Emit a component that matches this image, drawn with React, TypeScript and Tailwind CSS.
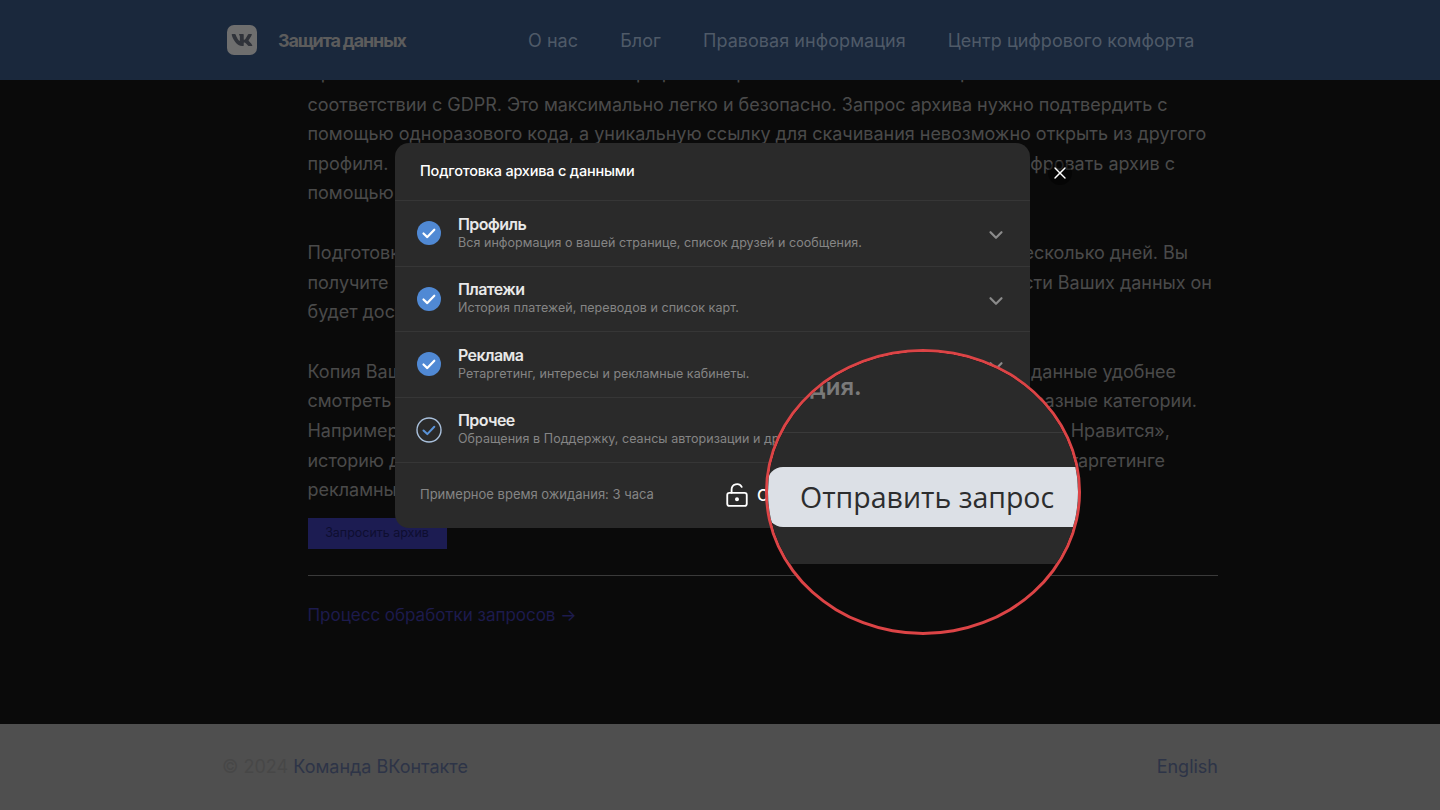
import { ChevronDown, LockKeyholeOpen, X } from "lucide-react";
import { FaVk } from "react-icons/fa";

const font = "font-['Inter',sans-serif]";

const sections = [
  { title: "Профиль", text: "Вся информация о вашей странице, список друзей и сообщения." },
  { title: "Платежи", text: "История платежей, переводов и список карт." },
  { title: "Реклама", text: "Ретаргетинг, интересы и рекламные кабинеты." },
  { title: "Прочее", text: "Обращения в Поддержку, сеансы авторизации и другая информация." },
];

function CheckMark({ outlined }: { outlined?: boolean }) {
  if (outlined) {
    return (
      <svg width="26" height="26" viewBox="0 0 26 26" fill="none">
        <circle cx="13" cy="13" r="12" stroke="#a9c0dc" strokeWidth="1.4" />
        <path d="M7.5 13.5l3.8 3.6 7-7.4" stroke="#5a93d8" strokeWidth="2" strokeLinecap="round" strokeLinejoin="round" />
      </svg>
    );
  }
  return (
    <svg width="26" height="26" viewBox="0 0 26 26" fill="none">
      <circle cx="13" cy="13" r="12" fill="#5089d4" />
      <path d="M7.5 13.5l3.8 3.6 7-7.4" stroke="#fff" strokeWidth="2.2" strokeLinecap="round" strokeLinejoin="round" />
    </svg>
  );
}

function Row({ title, text, outlined }: { title: string; text: string; outlined?: boolean }) {
  return (
    <div className="flex h-[65.5px] items-center border-t border-[#363636] pl-[21px] pr-[23px]">
      <CheckMark outlined={outlined} />
      <div className="ml-[16px] flex-1 pb-[2px]">
        <div className="mb-[2px] text-[16px] leading-[18px] font-semibold tracking-[-0.6px] text-[#e8e8e8]">{title}</div>
        <div className="text-[12.5px] leading-[15px] tracking-[0.05px] text-[#858585]">{text}</div>
      </div>
      <ChevronDown size={22} strokeWidth={2.4} className="mt-[4px] text-[#8a8a8a]" />
    </div>
  );
}

function Line({ left, right, end }: { left: string; right: string; end: string }) {
  return (
    <div className={`flex justify-between whitespace-nowrap ${end}`}>
      <span>{left}</span>
      <span>{right}</span>
    </div>
  );
}

export default function App() {
  return (
    <div className={`relative h-[810px] w-[1440px] overflow-hidden bg-[#0a0a0a] ${font}`}>
      <header className="absolute inset-x-0 top-0 z-10 flex h-[80px] items-center bg-[#1a283c] pl-[227px] text-[18px] tracking-[0.05px] text-[#4f5a68]">
        <div className="flex size-[30px] items-center justify-center rounded-[7px] bg-[#6e6e6e]">
          <FaVk size={22} className="text-[#30333a]" />
        </div>
        <div className="ml-[21px] w-[250px] font-bold tracking-[-1.15px] text-[#5c5c5c]">Защита данных</div>
        <nav className="flex gap-[42px]">
          <span>О нас</span>
          <span>Блог</span>
          <span>Правовая информация</span>
          <span>Центр цифрового комфорта</span>
        </nav>
      </header>

      <main className="h-[724px] pl-[307.5px] pr-[222px] pt-[60px] text-[18px] leading-[29.6px] tracking-[-0.02px] text-[#4a4a4a]">
        <p className="-mt-[2px] mb-[2px] whitespace-nowrap">
          Прямо сейчас вы сможете в своём профиле запросить все свои личные файлы
        </p>
        <p className="whitespace-nowrap">
          соответствии с GDPR. Это максимально легко и безопасно. Запрос архива нужно подтвердить с
          <br />
          помощью одноразового кода, а уникальную ссылку для скачивания невозможно открыть из другого
        </p>
        <Line left="профиля." right="зашифровать архив с" end="pr-[43px]" />
        <p>помощью</p>

        <div className="mt-[30px]">
          <Line left="Подготовка" right="несколько дней. Вы" end="pr-[30px]" />
          <Line left="получите" right="безопасности Ваших данных он" end="pr-[6px]" />
          <p>будет доступен</p>
        </div>

        <div className="mt-[30px]">
          <Line left="Копия Ваших" right="данные удобнее" end="pr-[42px]" />
          <Line left="смотреть" right="разные категории." end="pr-[21px]" />
          <Line left="Например" right="Нравится»," end="pr-[48px]" />
          <Line left="историю д" right="таргетинге" end="pr-[53px]" />
          <p>рекламных</p>
        </div>

        <button className="mt-[13px] flex h-[31px] w-[139px] items-center justify-center bg-[#1c1c52] text-[12.5px] text-[#0e0e30]">
          Запросить архив
        </button>
        <div className="mt-[26px] h-px bg-[#3a3a3a]" />
        <a className="mt-[25px] block text-[17px] text-[#1d1b4d]">Процесс обработки запросов →</a>
      </main>

      <footer className="flex h-[86px] items-center justify-between bg-[#4f4f4f] px-[222px] pb-[2px] text-[18px] text-[#2d3447]">
        <div>
          <span className="text-[#474747]">© 2024 </span>Команда ВКонтакте
        </div>
        <div>English</div>
      </footer>

      {/* modal window */}
      <div className="absolute left-[395px] top-[143px] z-20 w-[635px] overflow-hidden rounded-[14px] bg-[#2a2a2a]">
        <div className="flex h-[57px] items-center pb-[2px] pl-[25px] text-[14.5px] font-medium tracking-[-0.2px] text-white">
          Подготовка архива с данными
        </div>
        {sections.map((s, i) => (
          <Row key={s.title} title={s.title} text={s.text} outlined={i === 3} />
        ))}
        <div className="flex h-[66px] items-center border-t border-[#363636] pb-[2px] pl-[25px] text-[13px] text-[#858585]">
          <span className="w-[304px]">Примерное время ожидания: 3 часа</span>
          <LockKeyholeOpen size={26} strokeWidth={1.7} className="text-white" />
          <span className="ml-[7px] text-[16px] font-medium text-white">С</span>
        </div>
      </div>

      <button className="absolute left-[1048px] top-[161px] z-20 flex size-[24px] items-center justify-center rounded-full bg-black/50 text-white">
        <X size={20} strokeWidth={1.7} />
      </button>

      {/* magnifier */}
      <div className="absolute left-[765px] top-[349px] z-30 h-[286px] w-[316px] overflow-hidden rounded-[50%] border-[3px] border-[#dc4446] bg-[#0a0a0a]">
        <div className="h-[212px] bg-[#2a2a2a] pt-[20px]">
          <div className="pl-[42px] text-[24px] leading-[30px] font-semibold text-[#7a7a7a]">дия.</div>
          <div className="mt-[30px] h-px bg-[#3a3a3a]" />
          <div className="ml-[-1px] mt-[34px] flex h-[60px] w-[340px] items-center rounded-l-[16px] bg-[#dce0e6] pl-[33px] font-['Open_Sans',sans-serif] text-[28.5px] text-[#2c2d2e]">
            Отправить запрос
          </div>
        </div>
      </div>
    </div>
  );
}
